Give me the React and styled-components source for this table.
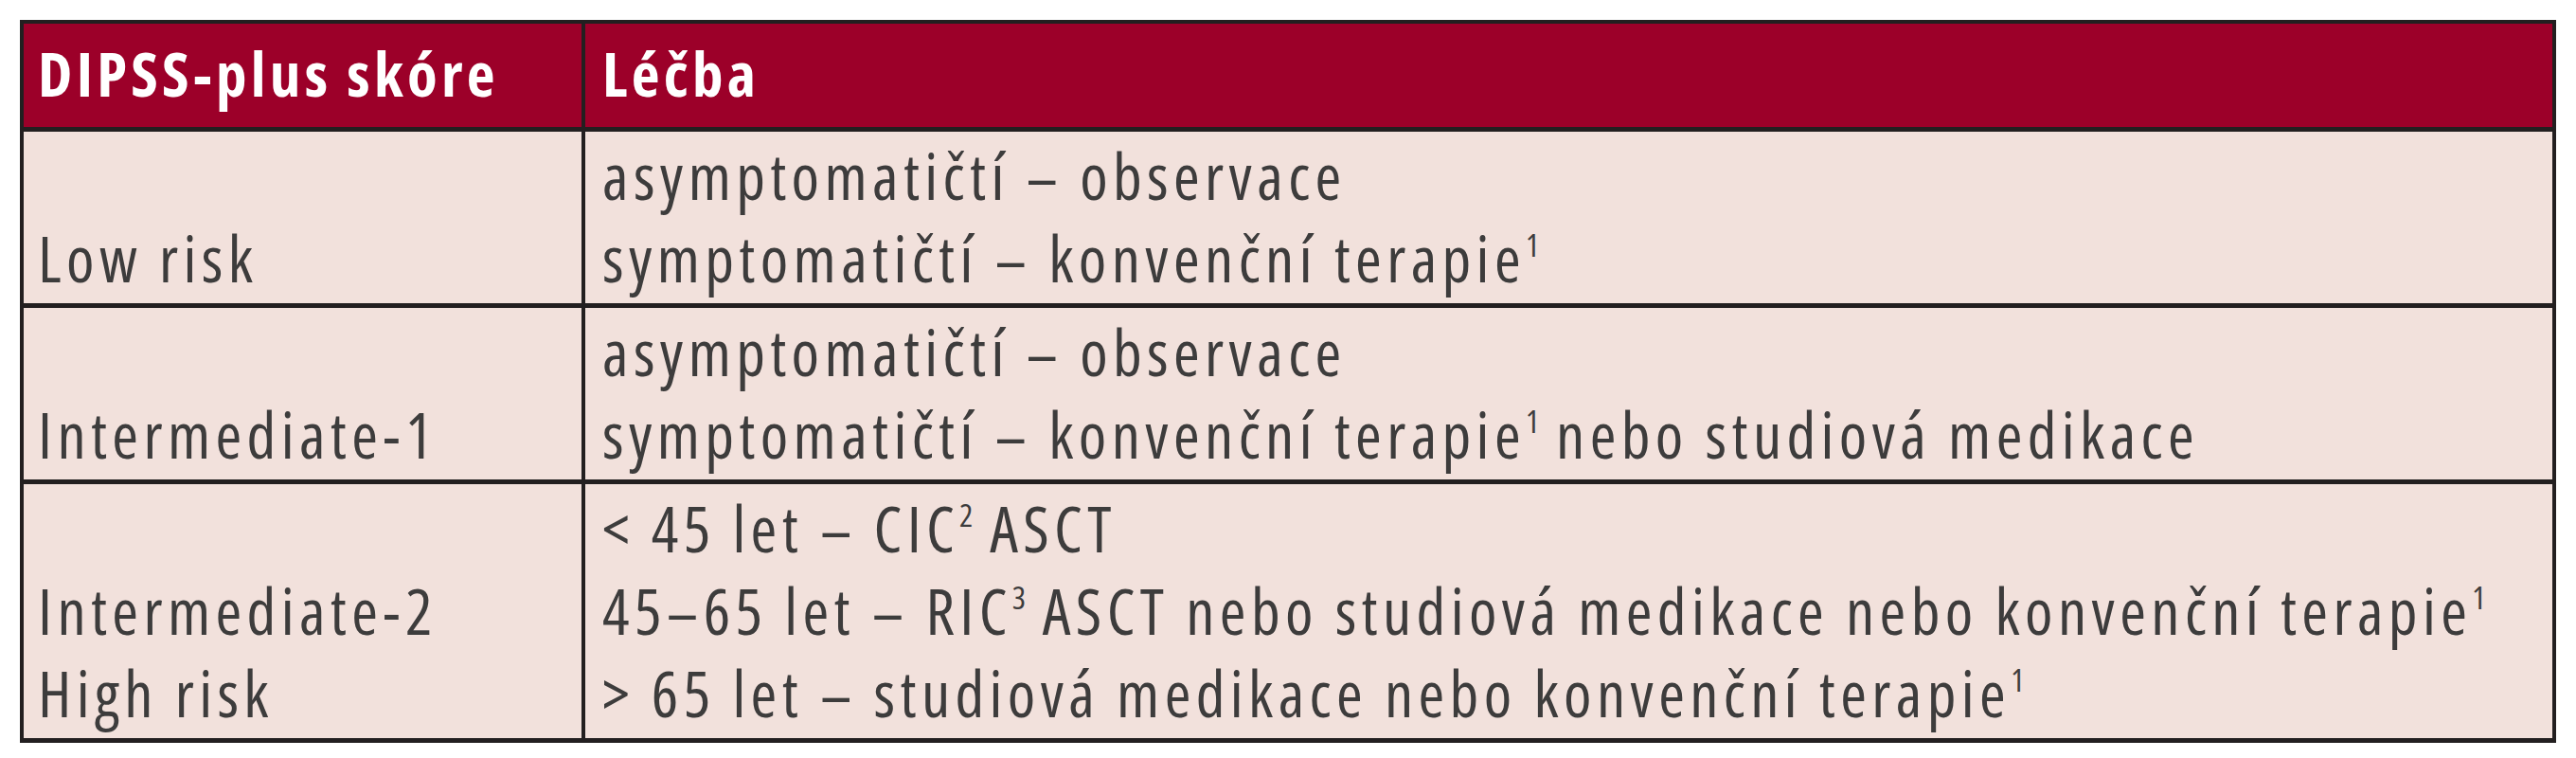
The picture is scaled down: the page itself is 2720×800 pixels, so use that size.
import React from "react";
import styled, { createGlobalStyle } from "styled-components";

const GlobalStyle = createGlobalStyle`
  body {
    margin: 0;
    background: #ffffff;
  }
`;

const rows = [
  {
    score: ["Low risk"],
    therapy: [
      ["asymptomatičtí – observace"],
      ["symptomatičtí – konvenční terapie", "1"],
    ],
  },
  {
    score: ["Intermediate-1"],
    therapy: [
      ["asymptomatičtí – observace"],
      ["symptomatičtí – konvenční terapie", "1", " nebo studiová medikace"],
    ],
  },
  {
    score: ["Intermediate-2", "High risk"],
    therapy: [
      ["< 45 let – CIC", "2", " ASCT"],
      ["45–65 let – RIC", "3", " ASCT nebo studiová medikace nebo konvenční terapie", "1"],
      ["> 65 let – studiová medikace nebo konvenční terapie", "1"],
    ],
  },
];

const Table = styled.div`
  margin: 21px 0 0 21px;
  width: 2678px;
  box-sizing: border-box;
  border: 4px solid #231f20;
  border-bottom-width: 5px;
  font-family: "Open Sans", "Liberation Sans", sans-serif;
  font-stretch: 75%;
`;

const Row = styled.div`
  display: grid;
  grid-template-columns: 589px 1fr;
  background: ${(p) => (p.$head ? "#9c0029" : "#f2e1dc")};
  & + & {
    border-top: 5px solid #231f20;
  }
`;

const Cell = styled.div`
  display: flex;
  flex-direction: column;
  justify-content: flex-end;
  padding: ${(p) => (p.$head ? "9px 0 13px" : "3px 0 4px")};
  padding-left: ${(p) => (p.$first ? "15px" : "18px")};
  border-left: ${(p) => (p.$first ? "none" : "4px solid #231f20")};
  color: ${(p) => (p.$head ? "#ffffff" : "#3d3c3c")};
  font-size: ${(p) => (p.$head ? "65px" : "67px")};
  font-weight: ${(p) => (p.$head ? 700 : 400)};
  letter-spacing: ${(p) => (p.$head ? "4.3px" : "5.4px")};
  line-height: 87px;
  white-space: nowrap;
`;

const Line = styled.div``;

const Sup = styled.sup`
  font-size: 0.5em;
  line-height: 0;
  vertical-align: 0.8em;
  letter-spacing: 0;
`;

function Text({ parts }) {
  return (
    <Line>
      {parts.map((p, i) => (i % 2 === 1 ? <Sup key={i}>{p}</Sup> : <span key={i}>{p}</span>))}
    </Line>
  );
}

export default function App() {
  return (
    <>
      <GlobalStyle />
      <Table>
        <Row $head>
          <Cell $head $first>DIPSS-plus skóre</Cell>
          <Cell $head>Léčba</Cell>
        </Row>
        {rows.map((r, i) => (
          <Row key={i}>
            <Cell $first>
              {r.score.map((s) => (
                <Line key={s}>{s}</Line>
              ))}
            </Cell>
            <Cell>
              {r.therapy.map((t, j) => (
                <Text key={j} parts={t} />
              ))}
            </Cell>
          </Row>
        ))}
      </Table>
    </>
  );
}
